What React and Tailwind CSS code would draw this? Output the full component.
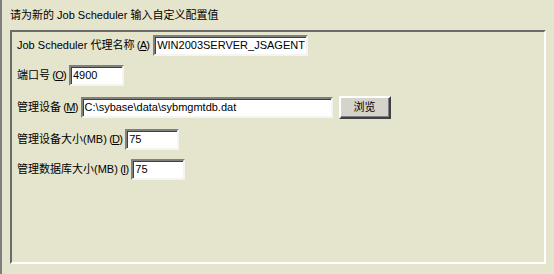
import React from 'react';

function Field({ value, width }) {
  return (
    <div
      className={`h-[21px] ${width} bg-white border-2 border-t-[#808080] border-l-[#808080] border-r-[#f4f4f4] border-b-[#f4f4f4] shadow-[inset_1px_1px_0_#404040] flex items-center pl-[2px] text-black whitespace-nowrap overflow-hidden`}
    >
      {value}
    </div>
  );
}

function Label({ text, hotkey }) {
  return (
    <span className="whitespace-nowrap">
      {text}
      <span className="tracking-[-0.75px]">
        {' '}(<span className="underline">{hotkey}</span>)
      </span>
    </span>
  );
}

export default function App() {
  return (
    <div className="w-[554px] h-[274px] bg-[#e5e4cc] border-l-2 border-[#7f7f7f] overflow-hidden text-[11px] text-black font-['Liberation_Sans','Noto_Sans_CJK_SC',sans-serif]">
      {/* Heading */}
      <div className="h-[30px] pl-[8px] pt-[8px] leading-[14px]">
        请为新的 Job Scheduler 输入自定义配置值
      </div>

      {/* Group box */}
      <div className="ml-[8px] w-[536px] h-[234px] border-2 border-t-[#6b6b6b] border-l-[#6b6b6b] border-r-white border-b-white pl-[5px] pt-[3px] flex flex-col gap-[9px]">
        <div className="flex items-center gap-[4px] h-[21px]">
          <Label text="Job Scheduler 代理名称" hotkey="A" />
          <Field value="WIN2003SERVER_JSAGENT" width="w-[155px]" />
        </div>

        <div className="flex items-center gap-[3px] h-[21px]">
          <Label text="端口号" hotkey="O" />
          <Field value="4900" width="w-[55px]" />
        </div>

        <div className="flex items-center gap-[3px] h-[23px] mt-[1px]">
          <Label text="管理设备" hotkey="M" />
          <Field value="C:\sybase\data\sybmgmtdb.dat" width="w-[252px]" />
          <button className="ml-[3px] w-[52px] h-[23px] bg-[#d6d3ca] border-2 border-t-white border-l-white border-r-[#404040] border-b-[#404040] shadow-[inset_-1px_-1px_0_#808080] flex items-center justify-center text-black">
            浏览
          </button>
        </div>

        <div className="flex items-center gap-[3px] h-[21px] mt-[1px]">
          <Label text="管理设备大小(MB)" hotkey="D" />
          <Field value="75" width="w-[54px]" />
        </div>

        <div className="flex items-center gap-[3px] h-[21px]">
          <Label text="管理数据库大小(MB)" hotkey="I" />
          <Field value="75" width="w-[54px]" />
        </div>
      </div>
    </div>
  );
}
